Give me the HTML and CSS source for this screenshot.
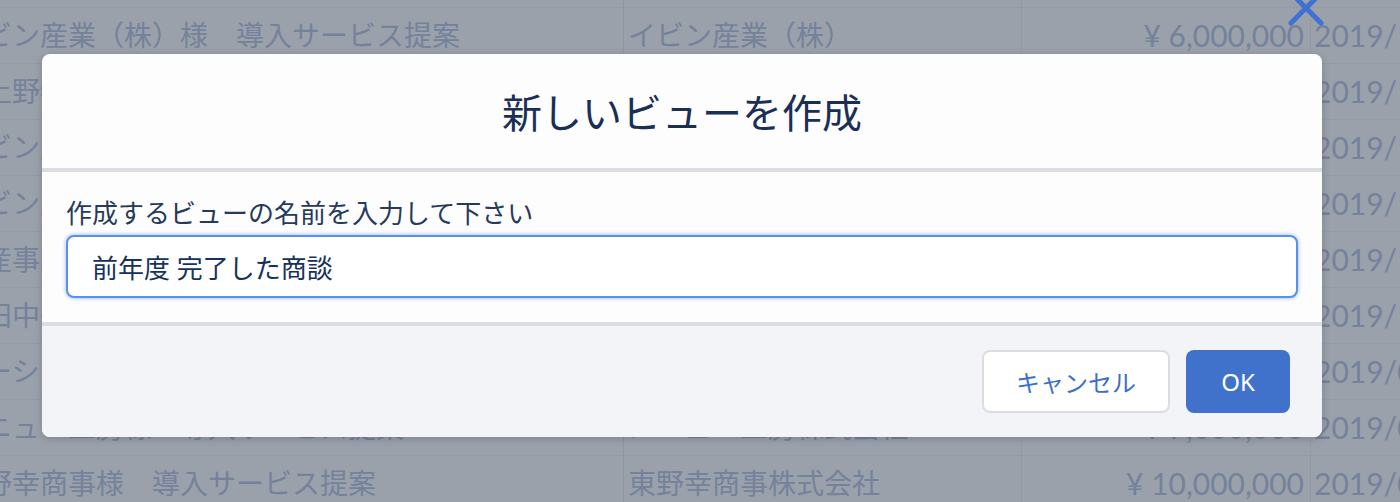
FILE: index.html
```html
<!DOCTYPE html>
<html lang="ja">
<head>
    <meta charset="UTF-8">
    <title>新しいビューを作成</title>
    <link rel="stylesheet" href="styles.css">
</head>
<body>
    <!-- list behind the backdrop -->
    <div class="list">
        <div class="records">
            <div class="row"><div class="cell name">イビン産業（株）様　導入サービス提案</div><div class="cell account">イビン産業（株）</div><div class="cell amount">¥ 5,000,000</div><div class="cell date">2019/12/01</div></div>
            <div class="row"><div class="cell name">イビン産業（株）様　導入サービス提案</div><div class="cell account">イビン産業（株）</div><div class="cell amount">¥ 6,000,000</div><div class="cell date">2019/12/01</div></div>
            <div class="row"><div class="cell name">北上野物産様　導入サービス提案</div><div class="cell account">北上野物産株式会社</div><div class="cell amount">¥ 3,000,000</div><div class="cell date">2019/11/15</div></div>
            <div class="row"><div class="cell name">イビン産業（株）様　追加提案</div><div class="cell account">イビン産業（株）</div><div class="cell amount">¥ 2,000,000</div><div class="cell date">2019/11/10</div></div>
            <div class="row"><div class="cell name">イビン産業（株）様　保守契約</div><div class="cell account">イビン産業（株）</div><div class="cell amount">¥ 1,500,000</div><div class="cell date">2019/10/30</div></div>
            <div class="row"><div class="cell name">東産事業様　導入サービス提案</div><div class="cell account">東産事業株式会社</div><div class="cell amount">¥ 4,000,000</div><div class="cell date">2019/10/20</div></div>
            <div class="row"><div class="cell name">吉田中央商事様　導入サービス提案</div><div class="cell account">吉田中央商事</div><div class="cell amount">¥ 800,000</div><div class="cell date">2019/10/12</div></div>
            <div class="row"><div class="cell name">エーシー商会様　導入サービス提案</div><div class="cell account">エーシー商会株式会社</div><div class="cell amount">¥ 2,500,000</div><div class="cell date">2019/09/28</div></div>
            <div class="row"><div class="cell name">メニュー工房様　導入サービス提案</div><div class="cell account">メニュー工房株式会社</div><div class="cell amount">¥ 7,000,000</div><div class="cell date">2019/09/15</div></div>
            <div class="row"><div class="cell name">東野幸商事様　導入サービス提案</div><div class="cell account">東野幸商事株式会社</div><div class="cell amount">¥ 10,000,000</div><div class="cell date">2019/09/01</div></div>
        </div>
    </div>

    <button class="close" aria-label="閉じる">
        <svg width="36" height="36" viewBox="0 0 36 36">
            <path d="M3 3 L33 33 M33 3 L3 33" stroke="#3f70d4" stroke-width="5" stroke-linecap="round"/>
        </svg>
    </button>

    <div class="modal">
        <div class="modal-header">
            <h2>新しいビューを作成</h2>
        </div>
        <div class="modal-body">
            <label for="view-name">作成するビューの名前を入力して下さい</label>
            <input id="view-name" type="text" value="前年度 完了した商談">
        </div>
        <div class="modal-footer">
            <button class="btn btn-neutral">キャンセル</button>
            <button class="btn btn-brand">OK</button>
        </div>
    </div>
</body>
</html>
```

FILE: styles.css
```css
body {
    margin: 0;
    background-color: #9aa1ab;
    font-family: "Noto Sans", "Noto Sans CJK JP", sans-serif;
    overflow: hidden;
    height: 502px;
    position: relative;
}
.list {
    width: 1400px;
    height: 502px;
    overflow: hidden;
}
.records {
    margin-top: -48px;
    margin-left: -52px;
    width: 1600px;
}
.row {
    display: flex;
    height: 55px;
    border-bottom: 1px solid #949ba6;
}
.cell {
    flex-shrink: 0;
    font-size: 28px;
    color: #75829c;
    line-height: 55px;
    white-space: nowrap;
    overflow: hidden;
}
.name {
    width: 667px;
    padding-left: 8px;
    border-right: 1px solid #8f96a1;
}
.account {
    width: 393px;
    padding-left: 4px;
    border-right: 1px solid #939aa5;
}
.amount {
    width: 282px;
    padding-right: 6px;
    text-align: right;
    border-right: 1px solid #939aa5;
}
.amount,
.date {
    font-family: Lato, "Noto Sans", sans-serif;
    font-size: 30px;
}
.date {
    padding-left: 3px;
}
.close {
    position: absolute;
    left: 1288px;
    top: -10px;
    padding: 0;
    border: none;
    background: none;
    cursor: pointer;
}
.modal {
    position: absolute;
    left: 42px;
    top: 54px;
    width: 1280px;
    border-radius: 8px;
    overflow: hidden;
    background-color: #fdfdfe;
    box-shadow: 0 2px 8px rgba(0, 0, 0, 0.18);
    display: flex;
    flex-direction: column;
}
.modal-header {
    height: 114px;
    display: flex;
    align-items: center;
    justify-content: center;
    border-bottom: 4px solid #dcdde4;
}
.modal-header h2 {
    margin: 0;
    font-size: 40px;
    font-weight: normal;
    color: #1a2f56;
}
.modal-body {
    padding: 23px 24px 24px;
    display: flex;
    flex-direction: column;
    gap: 4px;
    border-bottom: 4px solid #dcdde4;
}
.modal-body label {
    font-size: 26px;
    line-height: 36px;
    color: #263a5c;
}
.modal-body input {
    height: 63px;
    box-sizing: border-box;
    border: 2px solid #5a90e6;
    border-radius: 8px;
    box-shadow: 0 0 4px #8fb3ee;
    padding: 0 24px;
    font-family: inherit;
    font-size: 26px;
    color: #16325c;
    outline: none;
}
.modal-footer {
    background-color: #f3f4f8;
    padding: 24px 32px 24px 24px;
    display: flex;
    justify-content: flex-end;
    gap: 16px;
}
.btn {
    height: 63px;
    border-radius: 8px;
    font-family: inherit;
    font-size: 24px;
    cursor: pointer;
}
.btn-neutral {
    width: 188px;
    background-color: #ffffff;
    border: 2px solid #dddbe3;
    color: #3d6fc8;
}
.btn-brand {
    width: 104px;
    background-color: #4072cc;
    border: none;
    color: #ffffff;
}
```
